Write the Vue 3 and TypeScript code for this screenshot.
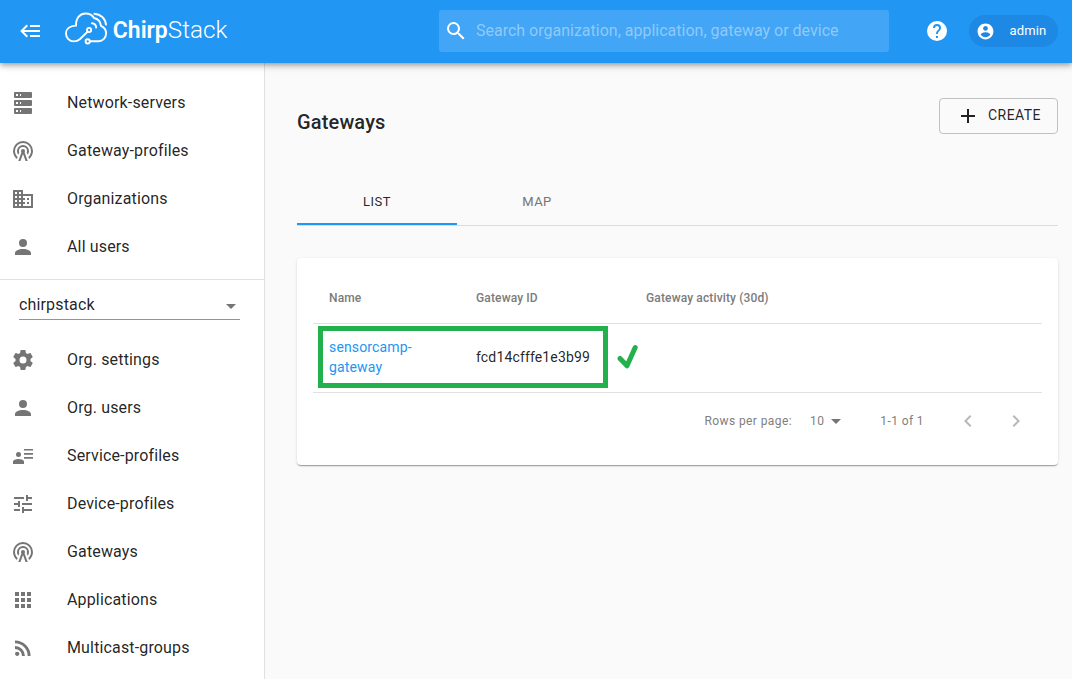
<script setup lang="ts">
interface NavItem {
  label: string
  icon: string
}

const icons: Record<string, string> = {
  back: 'M5,13L9,17L7.6,18.42L1.18,12L7.6,5.58L9,7L5,11H21V13H5M21,6V8H11V6H21M21,16V18H11V16H21Z',
  search: 'M9.5,3A6.5,6.5 0 0,1 16,9.5C16,11.11 15.41,12.59 14.44,13.73L14.71,14H15.5L20.5,19L19,20.5L14,15.5V14.71L13.73,14.44C12.59,15.41 11.11,16 9.5,16A6.5,6.5 0 0,1 3,9.5A6.5,6.5 0 0,1 9.5,3M9.5,5C7,5 5,7 5,9.5C5,12 7,14 9.5,14C12,14 14,12 14,9.5C14,7 12,5 9.5,5Z',
  help: 'M15.07,11.25L14.17,12.17C13.45,12.89 13,13.5 13,15H11V14.5C11,13.39 11.45,12.39 12.17,11.67L13.41,10.41C13.78,10.05 14,9.55 14,9C14,7.89 13.1,7 12,7A2,2 0 0,0 10,9H8A4,4 0 0,1 12,5A4,4 0 0,1 16,9C16,9.88 15.64,10.67 15.07,11.25M13,19H11V17H13M12,2A10,10 0 0,0 2,12A10,10 0 0,0 12,22A10,10 0 0,0 22,12C22,6.47 17.5,2 12,2Z',
  accountCircle: 'M12 2C6.48 2 2 6.48 2 12s4.48 10 10 10 10-4.48 10-10S17.52 2 12 2zm0 3c1.66 0 3 1.34 3 3s-1.34 3-3 3-3-1.34-3-3 1.34-3 3-3zm0 14.2c-2.5 0-4.71-1.28-6-3.22.03-1.99 4-3.08 6-3.08 1.99 0 5.97 1.09 6 3.08-1.29 1.94-3.5 3.22-6 3.22z',
  server: 'M4,1H20A1,1 0 0,1 21,2V6A1,1 0 0,1 20,7H4A1,1 0 0,1 3,6V2A1,1 0 0,1 4,1M4,9H20A1,1 0 0,1 21,10V14A1,1 0 0,1 20,15H4A1,1 0 0,1 3,14V10A1,1 0 0,1 4,9M4,17H20A1,1 0 0,1 21,18V22A1,1 0 0,1 20,23H4A1,1 0 0,1 3,22V18A1,1 0 0,1 4,17M9,5H10V3H9V5M9,13H10V11H9V13M9,21H10V19H9V21M5,3V5H7V3H5M5,11V13H7V11H5M5,19V21H7V19H5Z',
  tower: 'M12,10A2,2 0 0,1 14,12C14,12.5 13.82,12.94 13.53,13.29L16.7,22H14.57L12,14.93L9.43,22H7.3L10.47,13.29C10.18,12.94 10,12.5 10,12A2,2 0 0,1 12,10M12,8A4,4 0 0,0 8,12C8,12.5 8.1,13 8.28,13.46L7.4,15.86C6.53,14.81 6,13.47 6,12A6,6 0 0,1 12,6A6,6 0 0,1 18,12C18,13.47 17.47,14.81 16.6,15.86L15.72,13.46C15.9,13 16,12.5 16,12A4,4 0 0,0 12,8M12,4A8,8 0 0,0 4,12C4,14.36 5,16.5 6.64,17.94L5.92,19.94C3.54,18.11 2,15.23 2,12A10,10 0 0,1 12,2A10,10 0 0,1 22,12C22,15.23 20.46,18.11 18.08,19.94L17.36,17.94C19,16.5 20,14.36 20,12A8,8 0 0,0 12,4Z',
  domain: 'M12 7V3H2v18h20V7H12zM6 19H4v-2h2v2zm0-4H4v-2h2v2zm0-4H4V9h2v2zm0-4H4V5h2v2zm4 12H8v-2h2v2zm0-4H8v-2h2v2zm0-4H8V9h2v2zm0-4H8V5h2v2zm10 12h-8v-2h2v-2h-2v-2h2v-2h-2V9h8v10zm-2-8h-2v2h2v-2zm0 4h-2v2h2v-2z',
  account: 'M12,4A4,4 0 0,1 16,8A4,4 0 0,1 12,12A4,4 0 0,1 8,8A4,4 0 0,1 12,4M12,14C16.42,14 20,15.79 20,18V20H4V18C4,15.79 7.58,14 12,14Z',
  cog: 'M12,15.5A3.5,3.5 0 0,1 8.5,12A3.5,3.5 0 0,1 12,8.5A3.5,3.5 0 0,1 15.5,12A3.5,3.5 0 0,1 12,15.5M19.43,12.97C19.47,12.65 19.5,12.33 19.5,12C19.5,11.67 19.47,11.34 19.43,11L21.54,9.37C21.73,9.22 21.78,8.95 21.66,8.73L19.66,5.27C19.54,5.05 19.27,4.96 19.05,5.05L16.56,6.05C16.04,5.66 15.5,5.32 14.87,5.07L14.5,2.42C14.46,2.18 14.25,2 14,2H10C9.75,2 9.54,2.18 9.5,2.42L9.13,5.07C8.5,5.32 7.96,5.66 7.44,6.05L4.95,5.05C4.73,4.96 4.46,5.05 4.34,5.27L2.34,8.73C2.21,8.95 2.27,9.22 2.46,9.37L4.57,11C4.53,11.34 4.5,11.67 4.5,12C4.5,12.33 4.53,12.65 4.57,12.97L2.46,14.63C2.27,14.78 2.21,15.05 2.34,15.27L4.34,18.73C4.46,18.95 4.73,19.03 4.95,18.95L7.44,17.94C7.96,18.34 8.5,18.68 9.13,18.93L9.5,21.58C9.54,21.82 9.75,22 10,22H14C14.25,22 14.46,21.82 14.5,21.58L14.87,18.93C15.5,18.67 16.04,18.34 16.56,17.94L19.05,18.95C19.27,19.03 19.54,18.95 19.66,18.73L21.66,15.27C21.78,15.05 21.73,14.78 21.54,14.63L19.43,12.97Z',
  accountDetails: 'M13,5H22V6.5H13V5M13,9H22V10.7H13V9M13,13H22V14.7H13V13M7.5,8A2.5,2.5 0 0,1 10,10.5A2.5,2.5 0 0,1 7.5,13A2.5,2.5 0 0,1 5,10.5A2.5,2.5 0 0,1 7.5,8M7.5,15C10.5,15 13,16.1 13,17.6V20H2V17.6C2,16.1 4.5,15 7.5,15Z',
  tune: 'M3 17v2h6v-2H3zM3 5v2h10V5H3zm10 16v-2h8v-2h-8v-2h-2v6h2zM7 9v2H3v2h4v2h2V9H7zm14 4v-2H11v2h10zm-6-4h2V7h4V5h-4V3h-2v6z',
  apps: 'M4 8h4V4H4v4zm6 12h4v-4h-4v4zm-6 0h4v-4H4v4zm0-6h4v-4H4v4zm6 0h4v-4h-4v4zm6-10v4h4V4h-4zm-6 4h4V4h-4v4zm6 6h4v-4h-4v4zm0 6h4v-4h-4v4z',
  rss: 'M6.18,15.64A2.18,2.18 0 0,1 8.36,17.82C8.36,19 7.38,20 6.18,20C5,20 4,19 4,17.82A2.18,2.18 0 0,1 6.18,15.64M4,4.44A15.56,15.56 0 0,1 19.56,20H16.73A12.73,12.73 0 0,0 4,7.27V4.44M4,10.1A9.9,9.9 0 0,1 13.9,20H11.07A7.07,7.07 0 0,0 4,12.93V10.1Z',
  plus: 'M19,13H13V19H11V13H5V11H11V5H13V11H19V13Z',
  menuDown: 'M7,10L12,15L17,10H7Z',
  left: 'M15.41 7.41L14 6l-6 6 6 6 1.41-1.41L10.83 12z',
  right: 'M10 6L8.59 7.41 13.17 12l-4.58 4.59L10 18l6-6z',
}

const globalNav: NavItem[] = [
  { label: 'Network-servers', icon: 'server' },
  { label: 'Gateway-profiles', icon: 'tower' },
  { label: 'Organizations', icon: 'domain' },
  { label: 'All users', icon: 'account' },
]

const orgNav: NavItem[] = [
  { label: 'Org. settings', icon: 'cog' },
  { label: 'Org. users', icon: 'account' },
  { label: 'Service-profiles', icon: 'accountDetails' },
  { label: 'Device-profiles', icon: 'tune' },
  { label: 'Gateways', icon: 'tower' },
  { label: 'Applications', icon: 'apps' },
  { label: 'Multicast-groups', icon: 'rss' },
]
</script>

<template>
  <div class="page">
    <header class="topbar">
      <svg class="icon back" viewBox="0 0 24 24"><path :d="icons.back" /></svg>
      <svg class="logo" viewBox="0 0 166 36" aria-label="ChirpStack">
        <g fill="none" stroke="#fff" stroke-width="1.9" stroke-linecap="round" transform="translate(0.8 0.4)">
          <path d="M22.7 21.4L15 28.8C13.2 30.4 11.4 31 9 31C4.6 31 1.2 27.6 1.2 23.2C1.2 18.8 4.8 15.4 11.2 15.2C11 7.4 15.4 3.1 20.8 3.1C24.6 3.1 27.6 4.8 29.2 7.6C33 8.4 35.8 11.6 36.2 15.4C39.4 16.8 41.3 19.4 41.3 22.9C41.3 27.4 38 30.8 33.8 30.8H25.4" />
          <circle cx="24.3" cy="19.6" r="2.1" />
          <circle cx="22.9" cy="31" r="2.1" />
          <path d="M27.2 12.9C29.8 13.1 31.2 14.7 31.4 17.2M29.6 3.3C35.8 3.7 40.6 8 41.2 14.2" />
        </g>
        <g class="wordmark" fill="#fff">
          <text x="48.8" y="28" textLength="55" lengthAdjust="spacingAndGlyphs" font-weight="600">Chirp</text>
          <text x="103.8" y="28" textLength="59.5" lengthAdjust="spacingAndGlyphs" font-weight="300">Stack</text>
        </g>
      </svg>
      <div class="search">
        <svg class="icon" viewBox="0 0 24 24"><path :d="icons.search" /></svg>
        <span>Search organization, application, gateway or device</span>
      </div>
      <svg class="icon help" viewBox="0 0 24 24"><path :d="icons.help" /></svg>
      <div class="chip">
        <svg class="icon" viewBox="0 0 24 24"><path :d="icons.accountCircle" /></svg>
        <span>admin</span>
      </div>
    </header>

    <div class="body">
      <nav class="sidebar">
        <ul class="nav nav-global">
          <li v-for="item in globalNav" :key="item.label">
            <svg class="icon" viewBox="0 0 24 24"><path :d="icons[item.icon]" /></svg>
            <span>{{ item.label }}</span>
          </li>
        </ul>
        <div class="org-select">
          <span>chirpstack</span>
          <svg class="icon" viewBox="0 0 24 24"><path :d="icons.menuDown" /></svg>
        </div>
        <ul class="nav">
          <li v-for="item in orgNav" :key="item.label">
            <svg class="icon" viewBox="0 0 24 24"><path :d="icons[item.icon]" /></svg>
            <span>{{ item.label }}</span>
          </li>
        </ul>
      </nav>

      <main class="content">
        <div class="title-row">
          <h1>Gateways</h1>
          <button class="create" type="button">
            <svg class="icon" viewBox="0 0 24 24"><path :d="icons.plus" /></svg>
            <span>CREATE</span>
          </button>
        </div>
        <div class="tabs">
          <div class="tab active">LIST</div>
          <div class="tab">MAP</div>
        </div>
        <section class="card">
          <div class="row head">
            <span>Name</span><span>Gateway ID</span><span>Gateway activity (30d)</span>
          </div>
          <div class="row data">
            <a class="link">sensorcamp-<br />gateway</a>
            <span>fcd14cfffe1e3b99</span>
            <span></span>
            <div class="highlight"></div>
            <svg class="check" viewBox="0 0 22 26"><path d="M3 14.5L10 21.8L18.2 3.5" /></svg>
          </div>
          <div class="pager">
            <span class="rows-label">Rows per page:</span>
            <span class="rows-value">10</span>
            <svg class="icon drop" viewBox="0 0 24 24"><path :d="icons.menuDown" /></svg>
            <span class="range">1-1 of 1</span>
            <svg class="icon arrow" viewBox="0 0 24 24"><path :d="icons.left" /></svg>
            <svg class="icon arrow" viewBox="0 0 24 24"><path :d="icons.right" /></svg>
          </div>
        </section>
      </main>
    </div>
  </div>
</template>

<style>
body {
  margin: 0;
  overflow: hidden;
}
</style>

<style scoped>
.page {
  width: 1072px;
  height: 679px;
  overflow: hidden;
  display: flex;
  flex-direction: column;
  background: #fafafa;
  color: rgba(0, 0, 0, 0.87);
  font-family: Roboto, "Liberation Sans", sans-serif;
  font-size: 16px;
}
.icon {
  width: 24px;
  height: 24px;
  flex: none;
  display: block;
  fill: currentColor;
}
.topbar {
  position: relative;
  z-index: 1;
  box-sizing: border-box;
  height: 63px;
  flex: none;
  display: flex;
  align-items: center;
  padding: 0 14px 1px 19px;
  background: #2196f3;
  color: #fff;
  box-shadow: 0 2px 4px -1px rgba(0, 0, 0, 0.2), 0 4px 5px 0 rgba(0, 0, 0, 0.14), 0 1px 10px 0 rgba(0, 0, 0, 0.12);
}
.logo {
  width: 166px;
  height: 36px;
  margin: -7px 0 0 21px;
  flex: none;
}
.wordmark {
  font-family: Roboto, sans-serif;
  font-size: 23.5px;
}
.search {
  box-sizing: border-box;
  width: 450px;
  height: 42px;
  margin-left: 209px;
  padding-left: 5px;
  display: flex;
  align-items: center;
  gap: 8px;
  border-radius: 3px;
  background: #42a5f5;
}
.search span {
  margin-top: -2px;
  color: #90caf9;
}
.help {
  margin-left: 36px;
}
.chip {
  box-sizing: border-box;
  width: 89px;
  height: 32px;
  margin-left: 20px;
  padding-left: 6.5px;
  display: flex;
  align-items: center;
  border-radius: 16px;
  background: #1e88e5;
  font-size: 13px;
  letter-spacing: 0.15px;
}
.chip .icon {
  width: 19px;
  height: 19px;
}
.chip span {
  margin: -1px 0 0 15px;
}
.body {
  flex: 1;
  min-height: 0;
  display: flex;
}
.sidebar {
  box-sizing: border-box;
  width: 265px;
  flex: none;
  padding-top: 16px;
  background: #fff;
  border-right: 1px solid #e0e0e0;
}
.nav {
  list-style: none;
  margin: 0;
  padding: 0;
}
.nav-global {
  padding-bottom: 8px;
  border-bottom: 1px solid #e0e0e0;
}
.nav li {
  height: 48px;
  display: flex;
  align-items: center;
  padding-left: 11px;
  gap: 32px;
  letter-spacing: 0.15px;
}
.nav .icon {
  color: #757575;
}
.nav span {
  margin-top: -1px;
}
.org-select {
  box-sizing: border-box;
  width: 221px;
  height: 31px;
  margin: 9px 0 16px 19px;
  padding-bottom: 1px;
  display: flex;
  align-items: center;
  justify-content: space-between;
  border-bottom: 1px solid #949494;
  letter-spacing: 0.15px;
}
.org-select span {
  margin-top: 2px;
}
.org-select .icon {
  margin: 4px -3px 0 0;
  color: #757575;
}
.content {
  flex: 1;
  padding: 35px 14px 0 32px;
}
.title-row {
  display: flex;
  align-items: flex-start;
  justify-content: space-between;
  height: 80px;
}
h1 {
  margin: 12px 0 0;
  font-size: 20px;
  line-height: 24px;
  font-weight: 500;
  letter-spacing: 0.15px;
}
.create {
  box-sizing: border-box;
  width: 119px;
  height: 36px;
  padding: 0 0 0 16px;
  display: flex;
  align-items: center;
  gap: 8px;
  border: 1px solid #c1c1c1;
  border-radius: 4px;
  background: transparent;
  color: rgba(0, 0, 0, 0.87);
  font: 400 14px Roboto, sans-serif;
  letter-spacing: 0.45px;
}
.create span {
  margin-top: -2px;
}
.tabs {
  display: flex;
  height: 47px;
  border-bottom: 1px solid #dcdcdc;
}
.tab {
  box-sizing: border-box;
  width: 160px;
  height: 47px;
  line-height: 47px;
  text-align: center;
  font-size: 13px;
  letter-spacing: 0.5px;
  color: #757575;
}
.tab.active {
  color: rgba(0, 0, 0, 0.87);
  border-bottom: 2px solid #2196f3;
}
.card {
  box-sizing: border-box;
  height: 207px;
  margin-top: 32px;
  padding: 16px;
  border-radius: 4px;
  background: #fff;
  box-shadow: 0 2px 1px -1px rgba(0, 0, 0, 0.2), 0 1px 1px 0 rgba(0, 0, 0, 0.14), 0 1px 3px 0 rgba(0, 0, 0, 0.12);
}
.row {
  box-sizing: border-box;
  display: grid;
  grid-template-columns: 147px 170px 1fr;
  align-items: center;
  padding-left: 16px;
  border-bottom: 1px solid #e0e0e0;
}
.head {
  height: 50px;
  padding-bottom: 2px;
  font-size: 12px;
  font-weight: 500;
  letter-spacing: 0.14px;
  color: #7b7b7b;
}
.data {
  position: relative;
  height: 69px;
  padding-bottom: 2px;
  font-size: 14px;
  line-height: 20px;
  letter-spacing: 0.15px;
}
.link {
  color: #2196f3;
}
.highlight {
  position: absolute;
  box-sizing: border-box;
  left: 5px;
  top: 2px;
  width: 290px;
  height: 62px;
  border: 5px solid #22b14c;
}
.check {
  position: absolute;
  left: 303.5px;
  top: 20px;
  width: 22px;
  height: 26px;
  fill: none;
  stroke: #22b14c;
  stroke-width: 5;
  stroke-linecap: round;
  stroke-linejoin: round;
}
.pager {
  height: 56px;
  display: flex;
  align-items: center;
  justify-content: flex-end;
  padding-right: 14px;
  font-size: 12px;
  letter-spacing: 0.4px;
  color: #808080;
}
.drop {
  color: #757575;
}
.rows-value {
  margin-left: 18px;
}
.range {
  margin: 0 32px;
}
.arrow {
  color: #b8b8b8;
}
.arrow + .arrow {
  margin-left: 24px;
}
</style>
